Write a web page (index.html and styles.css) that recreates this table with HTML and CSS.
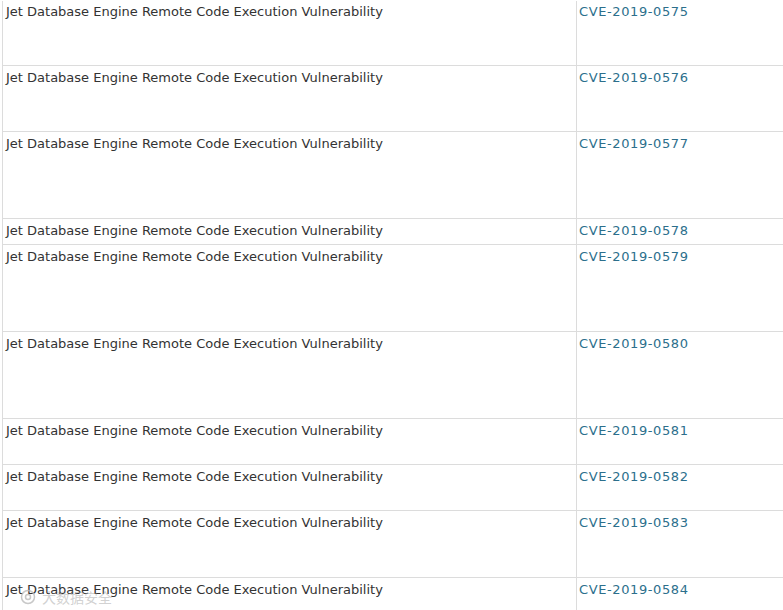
FILE: index.html
```html
<!DOCTYPE html>
<html>
<head>
<meta charset="utf-8">
<link rel="stylesheet" href="styles.css">
</head>
<body>
<div class="page">
  <table class="vulns">
    <tr class="r64 first"><td class="desc">Jet Database Engine Remote Code Execution Vulnerability</td><td class="cve"><a href="#">CVE-2019-0575</a></td></tr>
    <tr class="r66"><td class="desc">Jet Database Engine Remote Code Execution Vulnerability</td><td class="cve"><a href="#">CVE-2019-0576</a></td></tr>
    <tr class="r87"><td class="desc">Jet Database Engine Remote Code Execution Vulnerability</td><td class="cve"><a href="#">CVE-2019-0577</a></td></tr>
    <tr class="r26"><td class="desc">Jet Database Engine Remote Code Execution Vulnerability</td><td class="cve"><a href="#">CVE-2019-0578</a></td></tr>
    <tr class="r87"><td class="desc">Jet Database Engine Remote Code Execution Vulnerability</td><td class="cve"><a href="#">CVE-2019-0579</a></td></tr>
    <tr class="r87"><td class="desc">Jet Database Engine Remote Code Execution Vulnerability</td><td class="cve"><a href="#">CVE-2019-0580</a></td></tr>
    <tr class="r46"><td class="desc">Jet Database Engine Remote Code Execution Vulnerability</td><td class="cve"><a href="#">CVE-2019-0581</a></td></tr>
    <tr class="r46"><td class="desc">Jet Database Engine Remote Code Execution Vulnerability</td><td class="cve"><a href="#">CVE-2019-0582</a></td></tr>
    <tr class="r67"><td class="desc">Jet Database Engine Remote Code Execution Vulnerability</td><td class="cve"><a href="#">CVE-2019-0583</a></td></tr>
    <tr class="r66"><td class="desc">Jet Database Engine Remote Code Execution Vulnerability</td><td class="cve"><a href="#">CVE-2019-0584</a></td></tr>
  </table>
  <div class="watermark">
    <svg width="16" height="16" viewBox="0 0 16 16"><circle cx="8" cy="8" r="6.5" fill="none" stroke="#bbb" stroke-width="1.5"/><circle cx="8" cy="8" r="2.5" fill="none" stroke="#bbb" stroke-width="1.5"/></svg>
    <span>大数据安全</span>
  </div>
</div>
</body>
</html>
```

FILE: styles.css
```css
html, body {
  margin: 0;
  padding: 0;
  background: #fff;
}
.page {
  position: relative;
  width: 783px;
  height: 610px;
  overflow: hidden;
}
.vulns {
  border-collapse: collapse;
  margin-left: 2px;
  margin-top: 1px;
  width: 900px;
  font-family: "DejaVu Sans", Verdana, sans-serif;
  font-size: 13px;
  color: #333;
  table-layout: fixed;
}
.vulns td {
  vertical-align: top;
  padding: 4px 3px 0 3px;
  line-height: 15px;
  border-top: 1px solid #dcdcdc;
  border-left: 1px solid #dcdcdc;
}
.vulns tr.first td {
  border-top: none;
  padding-top: 3px;
}
.vulns td.desc { width: 567px; }
.vulns td.cve { padding-left: 2px; }
.vulns td.cve a {
  color: #2c6f8c;
  text-decoration: none;
  letter-spacing: 0.6px;
}
tr.r64 td { height: 61px; }
tr.r66 td { height: 61px; }
tr.r87 td { height: 82px; }
tr.r26 td { height: 21px; }
tr.r46 td { height: 41px; }
tr.r67 td { height: 62px; }
.watermark {
  position: absolute;
  left: 20px;
  top: 587px;
  display: flex;
  align-items: center;
  gap: 6px;
  color: rgba(150,150,150,0.55);
  font-family: "Noto Sans CJK SC", sans-serif;
  font-size: 14px;
  opacity: 0.8;
}
```
